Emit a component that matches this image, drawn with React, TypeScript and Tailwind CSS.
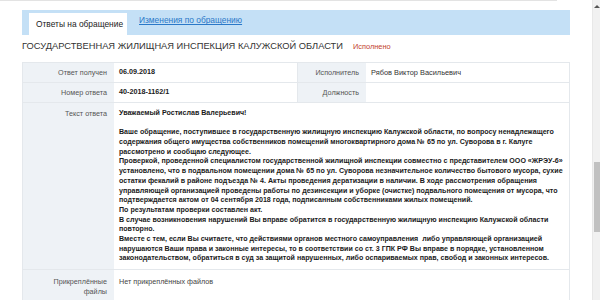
import React from "react";

const answerLines = [
  "Уважаемый Ростислав Валерьевич!",
  "",
  "Ваше обращение, поступившее в государственную жилищную инспекцию Калужской области, по вопросу ненадлежащего",
  "содержания общего имущества собственников помещений многоквартирного дома № 65 по ул. Суворова в г. Калуге",
  "рассмотрено и сообщаю следующее.",
  "Проверкой, проведенной специалистом государственной жилищной инспекции совместно с представителем ООО «ЖРЭУ-6»",
  "установлено, что в подвальном помещении дома № 65 по ул. Суворова незначительное количество бытового мусора, сухие",
  "остатки фекалий в районе подъезда № 4. Акты проведения дератизации в наличии. В ходе рассмотрения обращения",
  "управляющей организацией проведены работы по дезинсекции и уборке (очистке) подвального помещения от мусора, что",
  "подтверждается актом от 04 сентября 2018 года, подписанным собственниками жилых помещений.",
  "По результатам проверки составлен акт.",
  "В случае возникновения нарушений Вы вправе обратится в государственную жилищную инспекцию Калужской области",
  "повторно.",
  "Вместе с тем, если Вы считаете, что действиями органов местного самоуправления  либо управляющей организацией",
  "нарушаются Ваши права и законные интересы, то в соответствии со ст. 3 ГПК РФ Вы вправе в порядке, установленном",
  "законодательством, обратиться в суд за защитой нарушенных, либо оспариваемых прав, свобод и законных интересов.",
];

const Label = ({ children, className = "" }: { children: React.ReactNode; className?: string }) => (
  <div
    className={`shrink-0 bg-[#eef2f6] pr-[7px] text-right text-[7.2px] leading-[9.7px] text-[#555] ${className}`}
  >
    {children}
  </div>
);

export default function App() {
  return (
    <div className="flex h-[300px] w-[600px] overflow-hidden bg-white font-['Liberation_Sans',Arial,sans-serif]">
      <div className="flex min-w-0 flex-1 flex-col">
        <div className="h-[4px] w-[557px] border-b border-[#e3e3e3] bg-[#f4f4f4]" />
        <div className="-mt-[4px] ml-[22px] h-[8px] w-[49px] rounded-b-[2px] bg-[#2b8be0]" />

        <div className="ml-[22px] mt-[13px] w-[548px]">
          <div className="flex h-[25px] items-end bg-[#c4e0f6] pl-[7px]">
            <div className="flex h-[22px] w-[98px] items-center bg-white pl-[7px] text-[8.4px] text-[#222]">
              Ответы на обращение
            </div>
            <a className="mb-[8px] ml-[12px] text-[8.4px] text-[#2a78c8] underline" href="#">
              Изменения по обращению
            </a>
          </div>

          <div className="flex h-[23px] items-center gap-[10px] pt-[1px]">
            <span className="text-[9.3px] uppercase text-[#333]">
              Государственная жилищная инспекция Калужской области
            </span>
            <span className="text-[7.4px] text-[#c2412d]">Исполнено</span>
          </div>

          <div className="mt-[4px] border-x border-t border-[#e4e8ec]">
            <div className="flex h-[20px] border-b border-[#e4e8ec]">
              <Label className="flex w-[91px] items-center justify-end">Ответ получен</Label>
              <div className="flex w-[183px] items-center pl-[5px] text-[7.2px] font-bold text-[#1a1a1a]">
                06.09.2018
              </div>
              <Label className="flex w-[69px] items-center justify-end border-l border-[#e4e8ec]">
                Исполнитель
              </Label>
              <div className="flex flex-1 items-center pl-[5px] text-[7.4px] text-[#333]">
                Рябов Виктор Васильевич
              </div>
            </div>
            <div className="flex h-[20px] border-b border-[#e4e8ec]">
              <Label className="flex w-[91px] items-center justify-end">Номер ответа</Label>
              <div className="flex w-[183px] items-center pl-[5px] text-[7.2px] font-bold text-[#1a1a1a]">
                40-2018-1162/1
              </div>
              <Label className="flex w-[69px] items-center justify-end border-l border-[#e4e8ec]">
                Должность
              </Label>
              <div className="flex-1" />
            </div>
            <div className="flex h-[167px] border-b border-[#e4e8ec]">
              <Label className="w-[91px] pt-[6px]">Текст ответа</Label>
              <div className="flex-1 pl-[5px] pt-[6px] text-[7.1px] font-bold leading-[9.7px] text-[#1a1a1a]">
                {answerLines.map((line, i) => (
                  <div key={i} className="h-[9.7px] whitespace-pre">
                    {line}
                  </div>
                ))}
              </div>
            </div>
            <div className="flex h-[40px]">
              <Label className="w-[91px] pt-[7px]">
                Прикреплённые
                <br />
                файлы
              </Label>
              <div className="flex-1 pl-[5px] pt-[7px] text-[7.2px] leading-[9.7px] text-[#444]">
                Нет прикреплённых файлов
              </div>
            </div>
          </div>
        </div>
      </div>

      <div className="flex h-[300px] w-[8px] shrink-0 flex-col items-center border-l border-[#e8e8e8] bg-[#f1f1f1]">
        <div className="mt-[5px] h-0 w-0 border-x-[3px] border-b-[3px] border-x-transparent border-b-[#555]" />
        <div className="mt-[154px] h-[70px] w-[6px] bg-[#c1c1c1]" />
      </div>
    </div>
  );
}
